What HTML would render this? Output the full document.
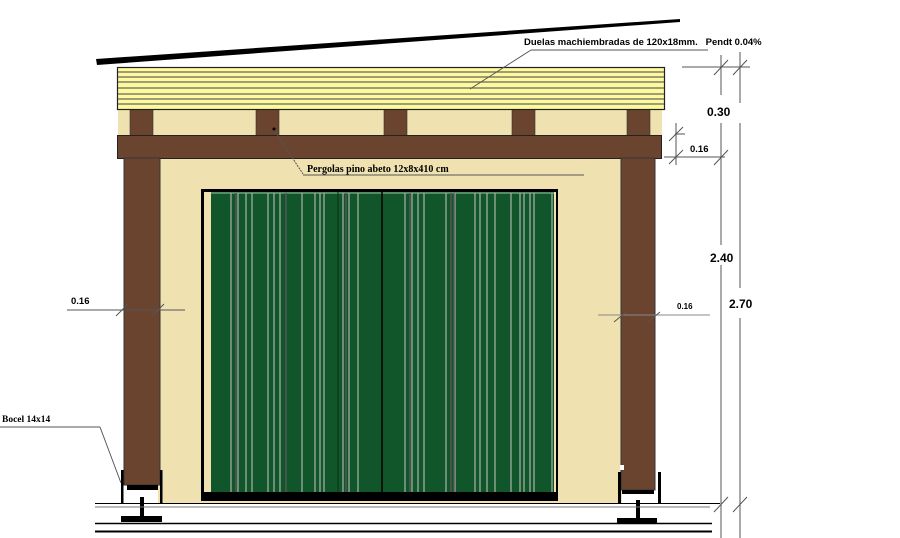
<!DOCTYPE html>
<html><head><meta charset="utf-8"><style>
html,body{margin:0;padding:0;background:#fff;width:900px;height:538px;overflow:hidden}
svg{display:block}
text{font-family:"Liberation Sans",sans-serif;font-weight:bold}
</style></head><body>
<svg width="900" height="538" viewBox="0 0 900 538">
<polygon points="96,59 680,19 680,22 97,65" fill="#000"/>
<rect x="118" y="108" width="544" height="28" fill="#f0e2b0"/>
<g fill="#6b4430" stroke="#333" stroke-width="0.6">
<rect x="130" y="108" width="23" height="28"/>
<rect x="256" y="108" width="23" height="28"/>
<rect x="384" y="108" width="23" height="28"/>
<rect x="512" y="108" width="23" height="28"/>
<rect x="627" y="108" width="23" height="28"/>
</g>
<rect x="117.5" y="67.5" width="547" height="42" fill="#fefa9c" stroke="#222" stroke-width="1.2"/>
<g stroke="#666" stroke-width="1.3">
<line x1="118" y1="72" x2="664" y2="72"/><line x1="118" y1="77" x2="664" y2="77"/>
<line x1="118" y1="82" x2="664" y2="82"/><line x1="118" y1="88" x2="664" y2="88"/>
<line x1="118" y1="94" x2="664" y2="94"/><line x1="118" y1="99" x2="664" y2="99"/>
<line x1="118" y1="104" x2="664" y2="104"/>
</g>
<rect x="158" y="158" width="464" height="345" fill="#f0e2b0"/>
<rect x="117.5" y="135.5" width="544" height="23" fill="#6b4430" stroke="#222" stroke-width="1"/>
<rect x="124" y="158" width="36" height="327" fill="#6b4430" stroke="#333" stroke-width="1"/>
<rect x="621" y="158" width="34" height="332" fill="#6b4430" stroke="#333" stroke-width="1"/>
<rect x="201" y="189" width="357" height="312" fill="#000"/>
<rect x="204" y="192" width="352" height="300" fill="#f0e2b0"/>
<rect x="211" y="192" width="343" height="300" fill="#11562a"/>
<line x1="211" y1="193" x2="554" y2="193" stroke="#9cc0a0" stroke-width="1"/>
<g stroke="#a9b5aa" stroke-width="1.2">
<line x1="231" y1="193" x2="231" y2="492"/><line x1="238" y1="193" x2="238" y2="492"/><line x1="246" y1="193" x2="246" y2="492"/>
<line x1="252" y1="193" x2="252" y2="492"/><line x1="268" y1="193" x2="268" y2="492"/><line x1="274" y1="193" x2="274" y2="492"/>
<line x1="280" y1="193" x2="280" y2="492"/><line x1="302" y1="193" x2="302" y2="492"/><line x1="315" y1="193" x2="315" y2="492"/>
<line x1="320" y1="193" x2="320" y2="492"/><line x1="324" y1="193" x2="324" y2="492"/><line x1="343" y1="193" x2="343" y2="492"/>
<line x1="349" y1="193" x2="349" y2="492"/><line x1="358" y1="193" x2="358" y2="492"/><line x1="405" y1="193" x2="405" y2="492"/>
<line x1="412" y1="193" x2="412" y2="492"/><line x1="418" y1="193" x2="418" y2="492"/><line x1="424" y1="193" x2="424" y2="492"/>
<line x1="446" y1="193" x2="446" y2="492"/><line x1="455" y1="193" x2="455" y2="492"/><line x1="475" y1="193" x2="475" y2="492"/>
<line x1="480" y1="193" x2="480" y2="492"/><line x1="487" y1="193" x2="487" y2="492"/><line x1="495" y1="193" x2="495" y2="492"/>
<line x1="511" y1="193" x2="511" y2="492"/><line x1="520" y1="193" x2="520" y2="492"/><line x1="524" y1="193" x2="524" y2="492"/>
<line x1="530" y1="193" x2="530" y2="492"/><line x1="534" y1="193" x2="534" y2="492"/><line x1="552" y1="193" x2="552" y2="492"/>
</g>
<g stroke="#555" stroke-width="1.5">
<line x1="236" y1="193" x2="236" y2="492"/><line x1="286" y1="193" x2="286" y2="492"/><line x1="346" y1="193" x2="346" y2="492"/>
<line x1="410" y1="193" x2="410" y2="492"/><line x1="451" y1="193" x2="451" y2="492"/><line x1="454" y1="193" x2="454" y2="492"/>
</g>
<line x1="382" y1="192" x2="382" y2="492" stroke="#000" stroke-width="1.5"/>
<line x1="338" y1="192" x2="338" y2="492" stroke="#0a3018" stroke-width="1"/>
<rect x="203" y="492" width="355" height="8" fill="#000"/>
<g fill="#000">
<rect x="121" y="470" width="2.5" height="33"/><rect x="160" y="470" width="2.5" height="33"/>
<rect x="127" y="485" width="31" height="5"/><rect x="140" y="497" width="4" height="20"/>
<rect x="121" y="516" width="41" height="6"/>
<rect x="618" y="472" width="3" height="31"/><rect x="658" y="472" width="3" height="31"/>
<rect x="622" y="490" width="32" height="4"/><rect x="636" y="500" width="4" height="19"/>
<rect x="617" y="518" width="40" height="6"/>
</g>
<rect x="620" y="465" width="4" height="5" fill="#fff"/>
<line x1="95" y1="503.5" x2="720" y2="503.5" stroke="#000" stroke-width="1"/>
<line x1="95" y1="507" x2="710" y2="507" stroke="#777" stroke-width="1"/>
<line x1="95" y1="523.5" x2="712" y2="523.5" stroke="#000" stroke-width="1.5"/>
<line x1="95" y1="531.5" x2="712" y2="531.5" stroke="#000" stroke-width="2"/>
<g stroke="#555" stroke-width="1" fill="none">
<line x1="721" y1="55" x2="721" y2="95"/><line x1="721" y1="123" x2="721" y2="245"/><line x1="721" y1="265" x2="721" y2="538"/>
<line x1="740" y1="52" x2="740" y2="103"/><line x1="740" y1="123" x2="740" y2="288"/><line x1="740" y1="318" x2="740" y2="538"/>
<line x1="682" y1="67" x2="750" y2="67"/>
<line x1="675" y1="134" x2="685" y2="134"/><line x1="664" y1="157" x2="725" y2="157"/>
<line x1="676" y1="123" x2="676" y2="165"/>
<line x1="714" y1="75" x2="728" y2="60"/><line x1="733" y1="75" x2="747" y2="60"/>
<line x1="669" y1="141" x2="683" y2="127"/><line x1="669" y1="164" x2="683" y2="150"/><line x1="714" y1="165" x2="728" y2="150"/>
<line x1="714" y1="512" x2="728" y2="497"/><line x1="733" y1="512" x2="747" y2="497"/>
<line x1="470" y1="89" x2="531" y2="50"/>
<line x1="531" y1="50" x2="708" y2="50"/>
<line x1="598" y1="315" x2="710" y2="315" stroke="#888"/>
<line x1="614" y1="322" x2="626" y2="312"/><line x1="648" y1="322" x2="660" y2="312"/>
<line x1="67" y1="310" x2="185" y2="310"/>
<line x1="116" y1="316" x2="128" y2="304"/><line x1="152" y1="316" x2="164" y2="304"/>
<line x1="0" y1="427" x2="100" y2="427"/><line x1="100" y1="427" x2="121" y2="483"/>
<line x1="274" y1="130" x2="303" y2="174" stroke-dasharray="2,1"/>
<line x1="303" y1="175" x2="584" y2="175"/>
</g>
<circle cx="274" cy="129" r="1.5" fill="#000"/>
<text x="524" y="45" font-size="9.5" fill="#000">Duelas machiembradas de 120x18mm.&#160;&#160;&#160;Pendt 0.04%</text>
<text x="307" y="172" font-size="10" style="font-family:'Liberation Serif',serif" fill="#000">Pergolas pino abeto 12x8x410 cm</text>
<text x="707" y="116" font-size="12" fill="#000">0.30</text>
<text x="690" y="152" font-size="9.5" fill="#000">0.16</text>
<text x="710" y="262" font-size="12" fill="#000">2.40</text>
<text x="729" y="308" font-size="12" fill="#000">2.70</text>
<text x="677" y="309" font-size="8" fill="#000">0.16</text>
<text x="71" y="304" font-size="9.5" fill="#000">0.16</text>
<text x="2" y="422" font-size="9.5" style="font-family:'Liberation Serif',serif" fill="#000">Bocel 14x14</text>
</svg>
</body></html>
